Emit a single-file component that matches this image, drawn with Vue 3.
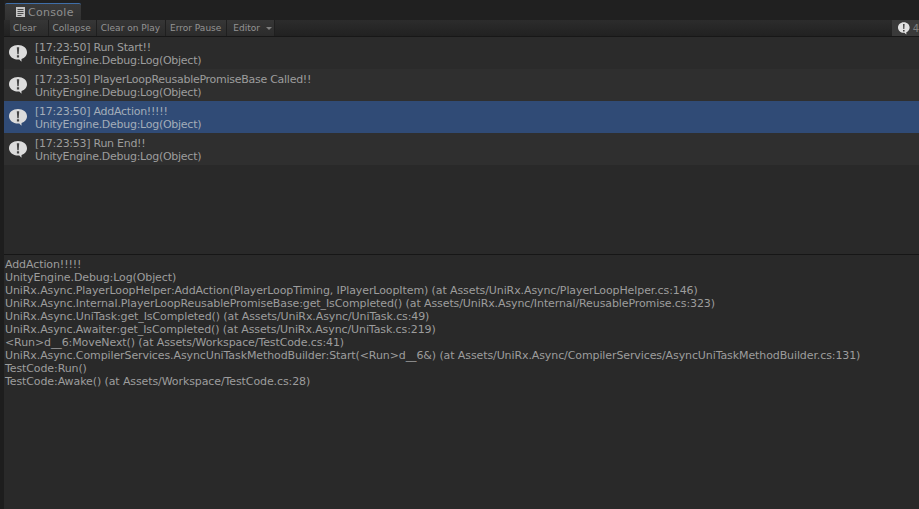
<script setup>
import { ref } from 'vue'

const toolbarButtons = ['Clear', 'Collapse', 'Clear on Play', 'Error Pause']

const logs = [
  { id: 1, title: '[17:23:50] Run Start!!', sub: 'UnityEngine.Debug:Log(Object)' },
  { id: 2, title: '[17:23:50] PlayerLoopReusablePromiseBase Called!!', sub: 'UnityEngine.Debug:Log(Object)' },
  { id: 3, title: '[17:23:50] AddAction!!!!!', sub: 'UnityEngine.Debug:Log(Object)' },
  { id: 4, title: '[17:23:53] Run End!!', sub: 'UnityEngine.Debug:Log(Object)' }
]

const selectedId = ref(3)

const stackLines = [
  'AddAction!!!!!',
  'UnityEngine.Debug:Log(Object)',
  'UniRx.Async.PlayerLoopHelper:AddAction(PlayerLoopTiming, IPlayerLoopItem) (at Assets/UniRx.Async/PlayerLoopHelper.cs:146)',
  'UniRx.Async.Internal.PlayerLoopReusablePromiseBase:get_IsCompleted() (at Assets/UniRx.Async/Internal/ReusablePromise.cs:323)',
  'UniRx.Async.UniTask:get_IsCompleted() (at Assets/UniRx.Async/UniTask.cs:49)',
  'UniRx.Async.Awaiter:get_IsCompleted() (at Assets/UniRx.Async/UniTask.cs:219)',
  '<Run>d__6:MoveNext() (at Assets/Workspace/TestCode.cs:41)',
  'UniRx.Async.CompilerServices.AsyncUniTaskMethodBuilder:Start(<Run>d__6&) (at Assets/UniRx.Async/CompilerServices/AsyncUniTaskMethodBuilder.cs:131)',
  'TestCode:Run()',
  'TestCode:Awake() (at Assets/Workspace/TestCode.cs:28)'
]
</script>

<template>
  <div class="window">
    <!-- tab strip -->
    <div class="tabbar">
      <div class="tab">
        <svg class="tab-icon" viewBox="0 0 9 10" width="9" height="10">
          <rect x="0" y="0" width="9" height="10" fill="#c4c4c4" />
          <path d="M1.500 2.500h6M1.500 4.500h6M1.500 6.500h6M1.500 8.500h4" stroke="#4a4a4a" stroke-width="1" />
        </svg>
        <span>Console</span>
      </div>
    </div>

    <!-- toolbar -->
    <div class="toolbar">
      <button v-for="label in toolbarButtons" :key="label" class="tool-btn">{{ label }}</button>
      <button class="tool-btn editor">Editor <i class="caret"></i></button>
      <div class="toolbar-fill"></div>
      <div class="counter">
        <svg viewBox="0 0 14 14" width="14" height="14">
          <path d="M7 1C3.600 1 1 3.400 1 6.500S3.600 12 7 12h.6l2 1.600v-2.200C11.700 10.500 13 8.700 13 6.500 13 3.400 10.400 1 7 1Z" fill="#e2e2e2" />
          <path d="M6.200 3h1.600l-.3 5H6.500ZM6.200 9h1.600v1.500H6.200Z" fill="#3a3a3a" />
        </svg>
        <span>4</span>
      </div>
    </div>

    <!-- log list -->
    <div class="list">
      <div
        v-for="(log, i) in logs"
        :key="log.id"
        class="row"
        :class="{ odd: i % 2 === 1, selected: log.id === selectedId }"
      >
        <svg class="row-icon" viewBox="0 0 20 20" width="20" height="20">
          <path d="M10 2C5 2 1 5.100 1 9.200S5 16.500 10 16.500h1.300l2.200 2.200v-2.700C16.700 14.900 19 12.400 19 9.200 19 5.100 15 2 10 2Z" fill="#dcdcdc" />
          <path d="M8.800 4.300h2.400l-.5 7H9.300ZM8.900 12.300h2.200v2.100H8.900Z" fill="#444" />
        </svg>
        <div class="row-text">
          <div>{{ log.title }}</div>
          <div>{{ log.sub }}</div>
        </div>
      </div>
    </div>

    <!-- stack trace -->
    <div class="detail">
      <div v-for="(line, i) in stackLines" :key="i" class="line">{{ line }}</div>
    </div>
  </div>
</template>

<style>
html, body {
  margin: 0;
  background: #292929;
}
</style>

<style scoped>
.window {
  width: 919px;
  height: 509px;
  display: flex;
  flex-direction: column;
  overflow: hidden;
  background: #292929;
  border-left: 4px solid #1d1d1d;
  box-sizing: border-box;
  font-family: "DejaVu Sans", sans-serif;
  font-size: 11px;
  color: #9d9d9d;
}

.tabbar {
  height: 20px;
  margin-left: -4px;
  padding: 3px 0 0 5px;
  box-sizing: border-box;
  background: #202020;
  flex: none;
}

.tab {
  width: 76px;
  height: 17px;
  box-sizing: border-box;
  border-top: 1px solid #3f6ea8;
  border-radius: 2px 2px 0 0;
  background: linear-gradient(#3a3a3a, #313131);
  display: flex;
  align-items: center;
  padding-left: 11px;
  gap: 3px;
  color: #8e8e8e;
  letter-spacing: 0.3px;
}

.tab-icon {
  flex: none;
}

.toolbar {
  height: 17px;
  flex: none;
  display: flex;
  padding-left: 6px;
  background: linear-gradient(#2c2c2c, #212121);
  border-bottom: 1px solid #171717;
  box-sizing: border-box;
}

.tool-btn {
  height: 16px;
  padding: 0 5px 0 4px;
  border: 0;
  border-right: 1px solid #1f1f1f;
  background: linear-gradient(#363636, #2b2b2b);
  font: inherit;
  font-size: 9px;
  color: #949494;
  box-sizing: content-box;
}

.tool-btn:first-child {
  padding: 0 11px 0 3px;
}

.editor {
  padding: 0 2px 0 6px;
}

.caret {
  display: inline-block;
  margin-left: 3px;
  vertical-align: 1px;
  border: 3px solid transparent;
  border-top-color: #808080;
  border-bottom: 0;
}

.toolbar-fill {
  flex: 1;
}

.counter {
  width: 27px;
  display: flex;
  align-items: center;
  gap: 2px;
  padding-left: 5px;
  box-sizing: border-box;
  background: #3a3a3a;
  color: #808080;
  font-size: 10px;
}

.list {
  height: 217px;
  flex: none;
  background: #292929;
  border-bottom: 1px solid #161616;
  box-sizing: content-box;
}

.row {
  height: 32px;
  display: flex;
  align-items: center;
  padding-left: 4px;
  gap: 7px;
  background: #2b2b2b;
}

.row.odd {
  background: #2f2f2f;
}

.row.selected {
  background: #304b76;
  color: #a3adb9;
}

.row:last-child {
  background: #2f2f2f;
}

.row-icon {
  flex: none;
}

.row-text {
  padding-top: 2px;
  line-height: 13px;
  white-space: nowrap;
  letter-spacing: -0.27px;
}

.detail {
  flex: 1;
  padding: 3px 0 0 1px;
  line-height: 13px;
  white-space: nowrap;
  letter-spacing: -0.1px;
}
</style>
